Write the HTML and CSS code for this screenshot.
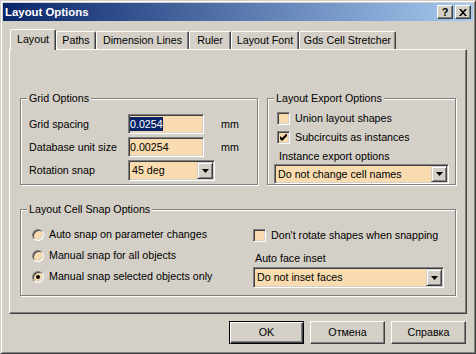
FILE: index.html
```html
<!DOCTYPE html>
<html>
<head>
<meta charset="utf-8">
<title>Layout Options</title>
<link rel="stylesheet" href="styles.css">
</head>
<body>
<div class="window">
  <div class="titlebar">
    <span class="title">Layout Options</span>
    <div class="tbtns">
      <span class="tbtn help">?</span>
      <span class="tbtn"><svg width="8" height="7" viewBox="0 0 8 7"><path d="M0 0h2l2 2.3 2-2.3h2l-3 3.5 3 3.5h-2l-2-2.3-2 2.3h-2l3-3.5z" fill="#000"/></svg></span>
    </div>
  </div>

  <div class="tabs">
    <div class="tab active t-layout">Layout</div>
    <div class="tab t-paths">Paths</div>
    <div class="tab t-dim">Dimension Lines</div>
    <div class="tab t-ruler">Ruler</div>
    <div class="tab t-font">Layout Font</div>
    <div class="tab t-gds">Gds Cell Stretcher</div>
  </div>

  <div class="panel">
    <div class="top-row">
      <fieldset class="group grid-group">
        <legend>Grid Options</legend>
        <div class="grid-form">
          <span class="lbl">Grid spacing</span>
          <div class="field"><span class="sel">0.0254</span></div>
          <span class="unit">mm</span>

          <span class="lbl">Database unit size</span>
          <div class="field"><span>0.00254</span></div>
          <span class="unit">mm</span>

          <span class="lbl">Rotation snap</span>
          <div class="combo combo-rot">
            <span class="combo-text">45 deg</span>
            <span class="drop"><svg width="7" height="4" viewBox="0 0 7 4"><path d="M0 0h7l-3.5 4z" fill="#000"/></svg></span>
          </div>
        </div>
      </fieldset>

      <fieldset class="group export-group">
        <legend>Layout Export Options</legend>
        <div class="export-form">
          <div class="check-row">
            <span class="checkbox"></span>
            <span>Union layout shapes</span>
          </div>
          <div class="check-row">
            <span class="checkbox"><svg width="7" height="7" viewBox="0 0 7 7"><path d="M0 2L2 4L7 -1V2L2 7L0 5Z" fill="#000"/></svg></span>
            <span>Subcircuits as instances</span>
          </div>
          <span class="sub-lbl">Instance export options</span>
          <div class="combo combo-export">
            <span class="combo-text">Do not change cell names</span>
            <span class="drop"><svg width="7" height="4" viewBox="0 0 7 4"><path d="M0 0h7l-3.5 4z" fill="#000"/></svg></span>
          </div>
        </div>
      </fieldset>
    </div>

    <fieldset class="group snap-group">
      <legend>Layout Cell Snap Options</legend>
      <div class="snap-form">
        <div class="radios">
          <div class="radio-row"><span class="radio"></span><span>Auto snap on parameter changes</span></div>
          <div class="radio-row"><span class="radio"></span><span>Manual snap for all objects</span></div>
          <div class="radio-row"><span class="radio on"></span><span>Manual snap selected objects only</span></div>
        </div>
        <div class="snap-right">
          <div class="check-row">
            <span class="checkbox"></span>
            <span>Don't rotate shapes when snapping</span>
          </div>
          <span class="sub-lbl inset-lbl">Auto face inset</span>
          <div class="combo combo-inset">
            <span class="combo-text">Do not inset faces</span>
            <span class="drop"><svg width="7" height="4" viewBox="0 0 7 4"><path d="M0 0h7l-3.5 4z" fill="#000"/></svg></span>
          </div>
        </div>
      </div>
    </fieldset>
  </div>

  <div class="buttons">
    <button class="btn default">OK</button>
    <button class="btn">Отмена</button>
    <button class="btn">Справка</button>
  </div>
</div>
</body>
</html>
```

FILE: styles.css
```css
html, body {
  margin: 0;
  padding: 0;
  background: #D4D0C8;
}

body {
  font-family: "Liberation Sans", Arial, sans-serif;
  font-size: 10.7px;
  line-height: 13px;
  color: #000;
}

.window {
  width: 476px;
  height: 354px;
  box-sizing: border-box;
  border: 1px solid;
  border-color: #D4D0C8 #404040 #404040 #D4D0C8;
  box-shadow: inset 1px 1px #fff, inset -1px -1px #808080;
  padding: 2px;
  background: #D4D0C8;
  display: flex;
  flex-direction: column;
}

/* title bar */
.titlebar {
  height: 18px;
  flex: 0 0 18px;
  display: flex;
  align-items: center;
  justify-content: space-between;
  padding: 0 2px;
  background: linear-gradient(to right, #0A246A, #A6CAF0);
}

.title {
  color: #fff;
  font-weight: bold;
  font-size: 11.4px;
}

.tbtns {
  display: flex;
  gap: 2px;
}

.tbtn {
  width: 16px;
  height: 14px;
  box-sizing: border-box;
  border: 1px solid;
  border-color: #fff #404040 #404040 #fff;
  box-shadow: inset -1px -1px #808080;
  background: #D4D0C8;
  display: flex;
  align-items: center;
  justify-content: center;
}

.tbtn.help {
  font-weight: bold;
  font-size: 11px;
  line-height: 12px;
}

/* tabs */
.tabs {
  display: flex;
  align-items: flex-end;
  height: 20px;
  margin: 8px 6px 0;
  padding-left: 1px;
}

.tab {
  box-sizing: border-box;
  height: 18px;
  border-left: 1px solid #fff;
  border-top: 1px solid #fff;
  border-right: 1px solid #404040;
  border-radius: 2px 2px 0 0;
  box-shadow: inset -1px 0 #808080;
  background: #D4D0C8;
  text-align: center;
  line-height: 17px;
}

.tab.active {
  height: 21px;
  margin-bottom: -1px;
  position: relative;
  z-index: 1;
  line-height: 18px;
}

.t-layout { width: 46px; }
.t-paths { width: 40px; }
.t-dim { width: 93px; }
.t-ruler { width: 42px; }
.t-font { width: 68px; }
.t-gds { width: 97px; }

/* panel */
.panel {
  height: 265px;
  box-sizing: border-box;
  margin: 0 6px;
  border: 1px solid;
  border-color: #fff #404040 #404040 #fff;
  box-shadow: inset -1px -1px #808080;
  padding: 42px 9px 0 10px;
}

.top-row {
  display: flex;
  gap: 9px;
  align-items: stretch;
}

.group {
  margin: 0;
  padding: 0;
  min-width: 0;
  box-sizing: border-box;
  border: 1px solid #808080;
  box-shadow: inset 1px 1px #fff, 1px 1px #fff;
}

.group legend {
  margin-left: 6px;
  padding: 0 2px;
  line-height: 13px;
  background: #D4D0C8;
}

.grid-group { width: 238px; }
.export-group { width: 189px; }

.grid-form {
  display: grid;
  grid-template-columns: 99px 76px auto;
  grid-template-rows: 20px 20px 21px;
  row-gap: 3px;
  align-items: center;
  padding: 9px 0 2px 8px;
}

.unit {
  margin-left: 17px;
}

.field {
  height: 20px;
  box-sizing: border-box;
  border: 1px solid;
  border-color: #808080 #fff #fff #808080;
  box-shadow: inset 1px 1px #404040, inset -1px -1px #D4D0C8;
  background: #F8DCB0;
  display: flex;
  align-items: center;
  padding-left: 1px;
}

.sel {
  background: #0A246A;
  color: #fff;
  line-height: 14px;
}

.combo {
  height: 21px;
  box-sizing: border-box;
  border: 1px solid;
  border-color: #808080 #fff #fff #808080;
  box-shadow: inset 1px 1px #404040, inset -1px -1px #D4D0C8;
  background: #F8DCB0;
  display: flex;
  align-items: center;
  justify-content: space-between;
  padding: 1px 1px 1px 3px;
}

.combo-text {
  white-space: nowrap;
}

.drop {
  width: 16px;
  height: 17px;
  box-sizing: border-box;
  border: 1px solid;
  border-color: #D4D0C8 #404040 #404040 #D4D0C8;
  box-shadow: inset 1px 1px #fff, inset -1px -1px #808080;
  background: #D4D0C8;
  display: flex;
  align-items: center;
  justify-content: center;
}

.drop svg { display: block; }

.combo-rot {
  grid-column: 2 / span 2;
  width: 87px;
}

.export-form {
  display: flex;
  flex-direction: column;
  align-items: flex-start;
  padding: 7px 0 0 6px;
}

.check-row {
  display: flex;
  align-items: center;
  gap: 5px;
  height: 13px;
  white-space: nowrap;
}

.export-form .check-row {
  margin-left: 3px;
  margin-bottom: 6px;
}

.checkbox {
  width: 13px;
  height: 13px;
  box-sizing: border-box;
  border: 1px solid;
  border-color: #808080 #fff #fff #808080;
  box-shadow: inset 1px 1px #404040, inset -1px -1px #D4D0C8;
  background: #F8DCB0;
  display: flex;
  align-items: center;
  justify-content: center;
}

.checkbox svg { display: block; }

.sub-lbl {
  margin-left: 5px;
  margin-bottom: 1px;
  white-space: nowrap;
}

.combo-export {
  width: 175px;
  height: 20px;
}

.combo-export .drop { height: 16px; }

/* snap group */
.snap-group {
  width: 436px;
  margin-top: 18px;
}

.snap-form {
  display: grid;
  grid-template-columns: 221px 191px;
  padding: 8px 0 7px 11px;
}

.radios {
  display: flex;
  flex-direction: column;
}

.radio-row {
  display: flex;
  align-items: center;
  gap: 5px;
  height: 21px;
  white-space: nowrap;
}

.radio {
  width: 12px;
  height: 12px;
  box-sizing: border-box;
  border-radius: 50%;
  border: 1px solid;
  border-color: #808080 #fff #fff #808080;
  box-shadow: inset 1px 1px #404040, inset -1px -1px #D4D0C8;
  background: #F8DCB0;
  display: flex;
  align-items: center;
  justify-content: center;
}

.radio.on::after {
  content: "";
  width: 4px;
  height: 4px;
  border-radius: 50%;
  background: #000;
}

.snap-right {
  display: flex;
  flex-direction: column;
  align-items: flex-start;
  padding-top: 5px;
}

.inset-lbl {
  margin-top: 10px;
  margin-left: 2px;
  margin-bottom: 2px;
}

.combo-inset { width: 191px; }

/* buttons */
.buttons {
  display: flex;
  justify-content: flex-end;
  gap: 6px;
  margin-top: 7px;
  padding-right: 7px;
}

.btn {
  width: 75px;
  height: 23px;
  box-sizing: border-box;
  margin: 0;
  padding: 0;
  font: inherit;
  color: #000;
  background: #D4D0C8;
  border: 1px solid;
  border-color: #fff #404040 #404040 #fff;
  box-shadow: inset -1px -1px #808080;
  border-radius: 0;
}

.btn.default {
  border-color: #000;
  box-shadow: inset 1px 1px #fff, inset -1px -1px #404040, inset -2px -2px #808080;
}
```
